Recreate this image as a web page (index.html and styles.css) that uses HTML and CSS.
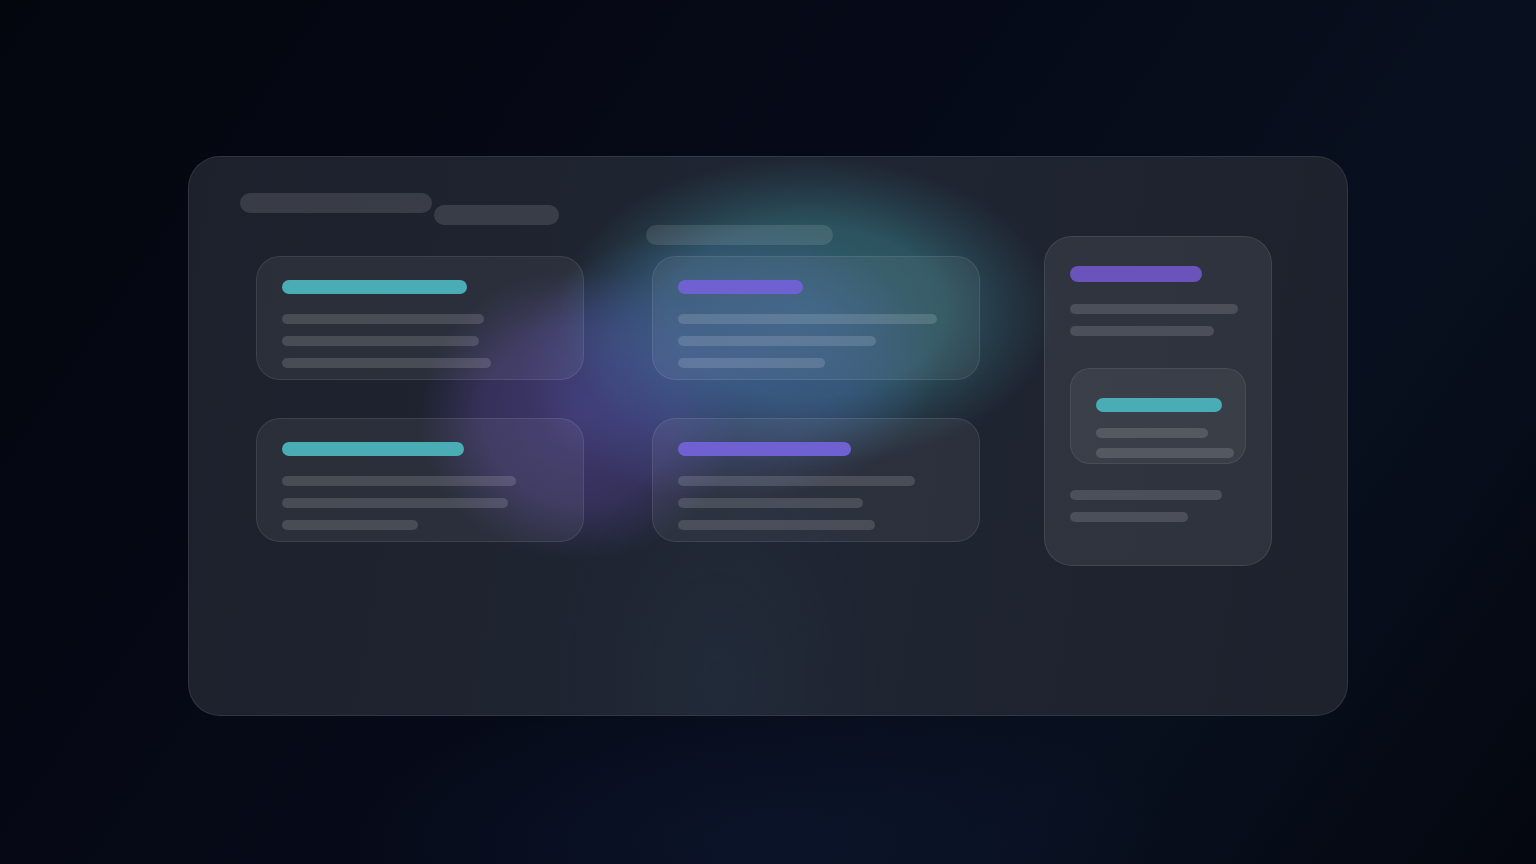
FILE: index.html
```html
<!DOCTYPE html>
<html lang="en">
<head>
<meta charset="utf-8">
<title>Dashboard skeleton</title>
<link rel="stylesheet" href="styles.css">
</head>
<body>
<div class="stage">
  <div class="panel">
    <div class="main">
      <div class="header">
        <div class="hbar hbar-a"></div>
        <div class="hbar hbar-b"></div>
        <div class="hbar hbar-c"></div>
      </div>
      <div class="grid">
        <div class="card">
          <div class="title teal" style="width:185px"></div>
          <div class="line" style="width:202px"></div>
          <div class="line" style="width:197px"></div>
          <div class="line" style="width:209px"></div>
        </div>
        <div class="card">
          <div class="title purple" style="width:125px"></div>
          <div class="line" style="width:259px"></div>
          <div class="line" style="width:198px"></div>
          <div class="line" style="width:147px"></div>
        </div>
        <div class="card">
          <div class="title teal" style="width:182px"></div>
          <div class="line" style="width:234px"></div>
          <div class="line" style="width:226px"></div>
          <div class="line" style="width:136px"></div>
        </div>
        <div class="card">
          <div class="title purple" style="width:173px"></div>
          <div class="line" style="width:237px"></div>
          <div class="line" style="width:185px"></div>
          <div class="line" style="width:197px"></div>
        </div>
      </div>
    </div>
    <div class="side">
      <div class="side-title purple-deep" style="width:132px"></div>
      <div class="line" style="width:168px"></div>
      <div class="line" style="width:144px"></div>
      <div class="inner">
        <div class="inner-title teal" style="width:126px"></div>
        <div class="line" style="width:112px"></div>
        <div class="line tight" style="width:138px"></div>
      </div>
      <div class="line after" style="width:152px"></div>
      <div class="line" style="width:118px"></div>
    </div>
  </div>
</div>
</body>
</html>
```

FILE: styles.css
```css
* { box-sizing: border-box; }

html, body {
  margin: 0;
  height: 100%;
}

body {
  font-family: "Inter", "Liberation Sans", sans-serif;
  background:
    radial-gradient(ellipse 600px 220px at 760px 840px, rgba(18, 30, 66, 0.35), transparent 70%),
    linear-gradient(125deg, #04060e 0%, #060a18 45%, #08101f 75%, #04070f 100%);
  overflow: hidden;
}

.stage {
  padding-top: 156px;
  display: flex;
  justify-content: center;
}

.panel {
  width: 1160px;
  height: 560px;
  border-radius: 32px;
  border: 1px solid rgba(255, 255, 255, 0.09);
  padding: 36px 75px 0 51px;
  display: flex;
  gap: 64px;
  align-items: flex-start;
  background:
    radial-gradient(ellipse 210px 140px at 540px 205px, rgba(74, 96, 172, 0.5) 0%, rgba(74, 96, 172, 0.32) 60%, transparent 100%),
    radial-gradient(ellipse 250px 155px at 618px 154px, rgba(56, 128, 140, 0.62) 0%, rgba(56, 128, 140, 0.5) 55%, rgba(56, 128, 140, 0.18) 82%, transparent 100%),
    radial-gradient(ellipse 160px 145px at 390px 258px, rgba(96, 74, 170, 0.5) 0%, rgba(96, 74, 170, 0.35) 60%, rgba(96, 74, 170, 0.1) 88%, transparent 100%),
    radial-gradient(ellipse 160px 240px at 530px 520px, rgba(40, 62, 82, 0.22), transparent 100%),
    linear-gradient(100deg, #1d212c 0%, #1f2532 50%, #1e222d 100%);
}

.main {
  width: 740px;
  flex: none;
}

.header {
  display: flex;
  align-items: flex-start;
  height: 52px;
}

.hbar {
  height: 20px;
  border-radius: 10px;
  background: rgba(255, 255, 255, 0.12);
}

.hbar-a { width: 192px; }
.hbar-b { width: 125px; margin-left: 2px; margin-top: 12px; }
.hbar-c { width: 187px; margin-left: 87px; margin-top: 32px; background: rgba(255, 255, 255, 0.11); }

.grid {
  margin: 11px 0 0 16px;
  display: grid;
  grid-template-columns: 328px 328px;
  column-gap: 68px;
  row-gap: 38px;
}

.card {
  height: 124px;
  border-radius: 24px;
  border: 1px solid rgba(255, 255, 255, 0.09);
  background: rgba(255, 255, 255, 0.06);
  padding: 23px 25px 0;
  display: flex;
  flex-direction: column;
}

.title {
  height: 14px;
  border-radius: 7px;
  margin-bottom: 20px;
}

.line {
  height: 10px;
  border-radius: 5px;
  background: rgba(255, 255, 255, 0.14);
  flex: none;
}

.line + .line { margin-top: 12px; }

.teal { background: #4aacb5; }
.purple { background: #7061d2; }
.purple-deep { background: #6a53bb; }

.side {
  width: 228px;
  height: 330px;
  flex: none;
  margin-top: 43px;
  border-radius: 28px;
  border: 1px solid rgba(255, 255, 255, 0.09);
  background: rgba(255, 255, 255, 0.075);
  padding: 29px 25px 0;
  display: flex;
  flex-direction: column;
}

.side-title {
  height: 16px;
  border-radius: 8px;
  margin-bottom: 22px;
}

.inner {
  margin-top: 32px;
  width: 176px;
  height: 96px;
  border-radius: 20px;
  border: 1px solid rgba(255, 255, 255, 0.08);
  background: rgba(255, 255, 255, 0.055);
  padding: 29px 25px 0;
  display: flex;
  flex-direction: column;
}

.inner-title {
  height: 14px;
  border-radius: 7px;
  margin-bottom: 16px;
}

.inner .line + .line.tight { margin-top: 10px; }

.line.after { margin-top: 26px; }
```
